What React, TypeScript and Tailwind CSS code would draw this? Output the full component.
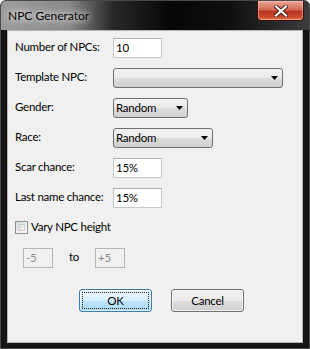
import React from "react";

const font = "font-['Lato',_'Noto_Sans',_sans-serif]";
const txt = "text-[11.5px] tracking-[-0.25px] leading-[16px]";

function TextBox({ value, w = "w-[49px]", disabled = false }: { value: string; w?: string; disabled?: boolean }) {
  return (
    <div
      className={`${w} h-[20px] border ${
        disabled ? "border-[#b5b5b5] bg-[#f0f0f0] text-[#8a8a8a]" : "border-[#c5c8cc] border-t-[#abadb3] bg-white text-black"
      } pl-[2px] text-[11.5px] tracking-[-0.25px] leading-[18px] whitespace-nowrap`}
    >
      {value}
    </div>
  );
}

function Arrow() {
  return (
    <svg width="7" height="4" viewBox="0 0 7 4" className="shrink-0">
      <path d="M0 0 H7 L3.5 4 Z" fill="#000" />
    </svg>
  );
}

function Combo({ value, w }: { value: string; w: string }) {
  return (
    <div
      className={`${w} h-[20px] rounded-[3px] border border-[#707070] bg-[linear-gradient(to_bottom,#f2f2f2_0%,#ebebeb_50%,#dddddd_51%,#cfcfcf_100%)] flex items-center justify-between pl-[2px] pr-[4px] ${txt}`}
    >
      <span>{value}</span>
      <Arrow />
    </div>
  );
}

function Row({ label, children }: { label: string; children: React.ReactNode }) {
  return (
    <div className="flex items-start h-[20px]">
      <div className={`w-[98px] shrink-0 whitespace-nowrap ${txt} mt-[1px]`}>{label}</div>
      {children}
    </div>
  );
}

export default function App() {
  return (
    <div
      className={`${font} w-[310px] h-[349px] flex flex-col bg-[#141414] rounded-t-[6px] border border-[#4a4a4a] text-black overflow-hidden`}
    >
      {/* Title bar */}
      <div className="h-[29px] flex items-start justify-between bg-[linear-gradient(to_right,#9c9c9c_0%,#8a8a8a_22%,#2a2a2a_36%,#060606_55%,#101010_75%,#3c3c3c_100%)]">
        <div className="pl-[7px] pt-[7px] text-[12px] leading-[16px] text-black [text-shadow:0_0_6px_rgba(255,255,255,0.95),0_0_10px_rgba(255,255,255,0.8)]">
          NPC Generator
        </div>
        <div className="mr-[5px] -mt-[1px] w-[47px] h-[21px] rounded-b-[4px] border border-[#3a0d06] bg-[linear-gradient(to_bottom,#e8a898_0%,#d26a55_45%,#b93320_55%,#c84a2c_85%,#e0805a_100%)] flex items-center justify-center shadow-[inset_0_0_0_1px_rgba(255,200,190,0.5)]">
          <svg width="14" height="12" viewBox="0 0 14 12">
            <path d="M2 1.5 L12 10.5 M12 1.5 L2 10.5" stroke="#4a1a10" strokeWidth="4" strokeLinecap="square" />
            <path d="M2 1.5 L12 10.5 M12 1.5 L2 10.5" stroke="#fff" strokeWidth="2.2" strokeLinecap="square" />
          </svg>
        </div>
      </div>

      {/* Client area */}
      <div className="ml-[6px] mr-[6px] mb-[5px] flex-1 border border-[#b4b4b4] bg-[#f0f0f0] flex flex-col pl-[7px] pt-[7px]">
        <div className="flex flex-col gap-[10px]">
          <Row label="Number of NPCs:">
            <TextBox value="10" />
          </Row>
          <Row label="Template NPC:">
            <Combo value="" w="w-[170px]" />
          </Row>
          <Row label="Gender:">
            <Combo value="Random" w="w-[75px]" />
          </Row>
          <Row label="Race:">
            <Combo value="Random" w="w-[100px]" />
          </Row>
          <Row label="Scar chance:">
            <TextBox value="15%" />
          </Row>
          <Row label="Last name chance:">
            <TextBox value="15%" />
          </Row>
        </div>

        <div className="mt-[13px] flex items-center h-[13px]">
          <div className="w-[13px] h-[13px] border border-[#8e8f8f] bg-[linear-gradient(135deg,#dcdcdc,#fbfbfb)] p-[2px]">
            <div className="w-full h-full border border-[#cfcfcf] bg-[linear-gradient(135deg,#d8d8d8,#f6f6f6)]" />
          </div>
          <span className={`ml-[3px] ${txt} -mt-[1px]`}>Vary NPC height</span>
        </div>

        <div className="mt-[14px] ml-[8px] flex items-start h-[20px]">
          <TextBox value="-5" w="w-[30px]" disabled />
          <span className={`ml-[16px] w-[26px] ${txt} mt-[1px]`}>to</span>
          <TextBox value="+5" w="w-[30px]" disabled />
        </div>

        <div className="mt-[21px] ml-[64px] flex gap-[19px]">
          <div className="w-[73px] h-[23px] rounded-[3px] border border-[#3c7fb1] bg-[linear-gradient(to_bottom,#eaf6fd_0%,#d9f0fc_50%,#bee6fd_51%,#a7d9f5_100%)] p-[2px] shadow-[inset_0_0_0_1px_rgba(255,255,255,0.6)]">
            <div className={`w-full h-full border border-dotted border-[#222] flex items-center justify-center ${txt}`}>
              OK
            </div>
          </div>
          <div className={`w-[73px] h-[23px] rounded-[3px] border border-[#707070] bg-[linear-gradient(to_bottom,#f2f2f2_0%,#ebebeb_50%,#dddddd_51%,#cfcfcf_100%)] shadow-[inset_0_0_0_1px_rgba(255,255,255,0.7)] flex items-center justify-center ${txt}`}>
            Cancel
          </div>
        </div>
      </div>
    </div>
  );
}
